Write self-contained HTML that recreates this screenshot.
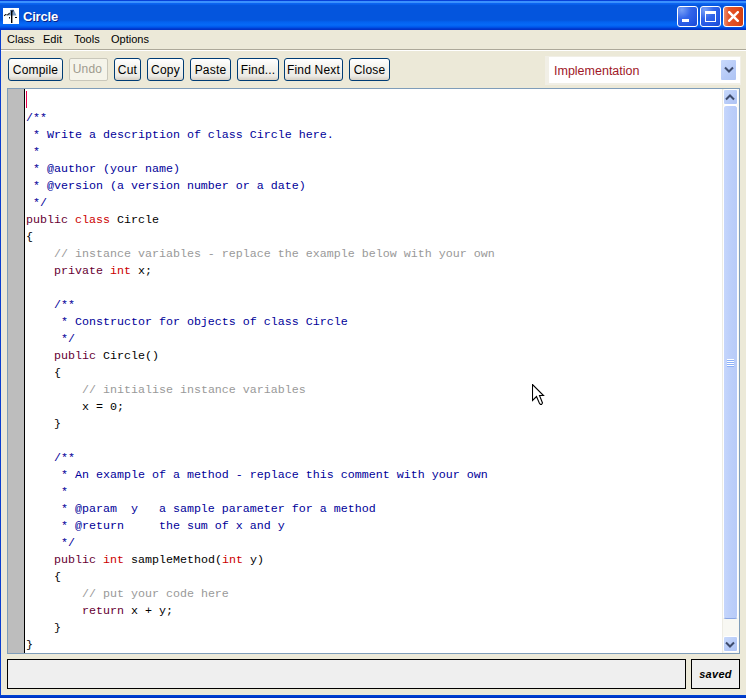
<!DOCTYPE html>
<html><head><meta charset="utf-8">
<style>
*{margin:0;padding:0;box-sizing:border-box}
html,body{width:746px;height:698px;overflow:hidden;background:#ECE9D8;font-family:"Liberation Sans",sans-serif}
.abs{position:absolute}
#win{position:absolute;left:0;top:0;width:746px;height:698px;background:#ECE9D8}
#title{position:absolute;left:0;top:0;width:746px;height:30px;
background:linear-gradient(to bottom,#0841D8 0px,#0841D8 1px,#3A93FF 1px,#3C8FFC 3px,#0D67F5 3px,#055CE6 5px,#0455DD 5px,#0455DD 20px,#0462F0 22px,#066BF8 25px,#0057EC 27px,#0048DC 28px,#0033C8 29px,#0033C8 30px)}
#lb{position:absolute;left:0;top:30px;width:1px;height:668px;background:#0A3FD0}
#bb{position:absolute;left:0;top:695px;width:746px;height:3px;background:linear-gradient(#0046D5,#0031C0)}
#ttext{position:absolute;left:23px;top:9px;color:#fff;font-weight:bold;font-size:13px;letter-spacing:-0.2px;text-shadow:1px 1px 0 #0A2288}
.tbtn{position:absolute;top:6px;width:21px;height:21px;border:1px solid #fff;border-radius:3px;overflow:hidden}
.menu{position:absolute;top:33px;font-size:11px;color:#000}
#sep{position:absolute;left:1px;top:49px;width:745px;height:1px;background:#ACA899}
#sep2{position:absolute;left:1px;top:50px;width:745px;height:1px;background:#fff}
.btn{position:absolute;top:58px;height:23px;border:1px solid #003C74;border-radius:3px;
background:linear-gradient(#FFFFFF,#F4F3EE 40%,#ECEBE6 80%,#D6D0C5);font-size:12px;color:#000;text-align:center;line-height:23px;white-space:nowrap;letter-spacing:0.2px}
.btn.dis{border-color:#C9C7BA;background:#F5F4EA;color:#9E9B8E;line-height:21px;text-indent:-2px;border-radius:2px}
#combo{position:absolute;left:549px;top:57px;width:191px;height:26px;background:#fff}
#code{position:absolute;left:7px;top:88px;width:733px;height:566px;border:1px solid #7F9DB9;background:#fff;overflow:hidden}
#gutter{position:absolute;left:0;top:0;width:17px;height:564px;background:#BDBDBD;border-right:1px solid #000}
pre{position:absolute;left:18px;top:4px;font-family:"Liberation Mono",monospace;font-size:11.67px;line-height:17px;color:#000}
.jd{color:#000099}.kw{color:#660033}.ty{color:#CC0000}.cm{color:#999999}
#vs{position:absolute;left:714px;top:0;width:17px;height:564px;background:#F8F8F3;border-left:1px solid #EDECE4}
.sb{position:absolute;left:0px;width:15px;border:1px solid #fff;border-radius:2px;background:linear-gradient(135deg,#C9DAFC,#B6CAF7 60%,#AFC4F4)}
#status{position:absolute;left:7px;top:659px;width:679px;height:30px;border:1px solid #000;background:#EFEFEF}
#saved{position:absolute;left:691px;top:659px;width:49px;height:30px;border:1px solid #000;background:#EFEFEF;font-size:11px;font-weight:bold;font-style:italic;text-align:center;line-height:29px;letter-spacing:0.3px;padding-left:0px}
</style></head><body>
<div id="win">
<div id="title">
  <svg class="abs" style="left:3px;top:8px" width="16" height="16" viewBox="0 0 16 16">
    <rect x="0" y="0" width="16" height="16" fill="#fff"/>
    <path d="M5 7.5 L8 2 L11 2.5 L13.5 7.5 Z" fill="#7C9AC0"/>
    <path d="M7 2 L10.5 1.8 L11 3 L9 4.5 Z" fill="#2A3F63"/>
    <rect x="8" y="3" width="1.4" height="12" fill="#000"/>
    <path d="M0.8 7.5 L2.5 6 L4 6.8 L6 5 L7 5.6 L4.5 7.6 L3 7 L1.2 8.2 Z" fill="#000"/>
    <rect x="6" y="9" width="1" height="1.5" fill="#111"/>
    <rect x="12" y="9" width="2" height="1" fill="#000"/>
  </svg>
  <div id="ttext">Circle</div>
  <div class="tbtn" style="left:677px;background:radial-gradient(circle at 20% 15%,#78A0F6 0,#3466EA 40%,#2256E2 75%,#1A48D2 100%)">
    <div class="abs" style="left:4px;top:12px;width:7px;height:3px;background:#fff"></div>
  </div>
  <div class="tbtn" style="left:700px;background:radial-gradient(circle at 20% 15%,#78A0F6 0,#3466EA 40%,#2256E2 75%,#1A48D2 100%)">
    <div class="abs" style="left:4px;top:4px;width:11px;height:11px;border:1px solid #fff;border-top-width:3px"></div>
  </div>
  <div class="tbtn" style="left:723px;background:linear-gradient(90deg,#EC8C6C 0,#E4552A 25%,#E04A1C 70%,#CF3E12 100%)">
    <svg class="abs" style="left:4px;top:4px" width="11" height="11" viewBox="0 0 11 11"><path d="M1.2 1.2 L9.8 9.8 M9.8 1.2 L1.2 9.8" stroke="#fff" stroke-width="2.4" stroke-linecap="square"/></svg>
  </div>
</div>
<div id="lb"></div><div id="bb"></div>
<div class="menu" style="left:7px">Class</div>
<div class="menu" style="left:43px">Edit</div>
<div class="menu" style="left:74px">Tools</div>
<div class="menu" style="left:111px">Options</div>
<div id="sep"></div><div id="sep2"></div>
<div class="btn" style="left:8px;width:55px">Compile</div>
<div class="btn dis" style="left:69px;width:39px">Undo</div>
<div class="btn" style="left:114px;width:27px">Cut</div>
<div class="btn" style="left:147px;width:37px">Copy</div>
<div class="btn" style="left:190px;width:41px">Paste</div>
<div class="btn" style="left:237px;width:42px">Find...</div>
<div class="btn" style="left:284px;width:59px">Find Next</div>
<div class="btn" style="left:349px;width:41px">Close</div>
<div class="abs" style="left:545px;top:56px;width:196px;height:29px;background:#F1EFE6"></div>
<div id="combo"><span class="abs" style="left:5px;top:7px;font-size:12.5px;color:#A01828">Implementation</span>
  <div class="abs" style="left:172px;top:3px;width:15px;height:20px;background:linear-gradient(135deg,#C9DAFC,#B6CAF7 60%,#AFC4F4);border-radius:1px">
    <svg class="abs" style="left:3px;top:6px" width="10" height="7" viewBox="0 0 10 7"><path d="M1 1.5 L5 5.5 L9 1.5" fill="none" stroke="#3D4B6C" stroke-width="2"/></svg>
  </div>
</div>
<div id="code">
<div id="gutter"></div>
<div class="abs" style="left:18px;top:2px;width:1px;height:17px;background:#E8004E"></div>
<pre>

<span class="jd">/**
 * Write a description of class Circle here.
 * 
 * @author (your name)
 * @version (a version number or a date)
 */</span>
<span class="kw">public</span> <span class="ty">class</span> Circle
{
    <span class="cm">// instance variables - replace the example below with your own</span>
    <span class="kw">private</span> <span class="ty">int</span> x;

    <span class="jd">/**
     * Constructor for objects of class Circle
     */</span>
    <span class="kw">public</span> Circle()
    {
        <span class="cm">// initialise instance variables</span>
        x = 0;
    }

    <span class="jd">/**
     * An example of a method - replace this comment with your own
     * 
     * @param  y   a sample parameter for a method
     * @return     the sum of x and y
     */</span>
    <span class="kw">public</span> <span class="ty">int</span> sampleMethod(<span class="ty">int</span> y)
    {
        <span class="cm">// put your code here</span>
        <span class="kw">return</span> x + y;
    }
}</pre>
<div id="vs">
  <div class="sb" style="top:0px;height:16px">
    <svg class="abs" style="left:1px;top:4px" width="10" height="7" viewBox="0 0 10 7"><path d="M1 5.5 L5 1.5 L9 5.5" fill="none" stroke="#3D4B6C" stroke-width="2"/></svg>
  </div>
  <div class="sb" style="top:16px;height:514px;border-radius:3px;border-bottom-color:#8AA6E4;background:linear-gradient(90deg,#C6D6FC,#BCCFFA 50%,#B8CBF8)">
    <div class="abs" style="left:3px;top:253px;width:7px;height:1px;background:#fff"></div>
    <div class="abs" style="left:3px;top:254px;width:7px;height:1px;background:#8CB0F8"></div>
    <div class="abs" style="left:3px;top:255px;width:7px;height:1px;background:#fff"></div>
    <div class="abs" style="left:3px;top:256px;width:7px;height:1px;background:#8CB0F8"></div>
    <div class="abs" style="left:3px;top:257px;width:7px;height:1px;background:#fff"></div>
    <div class="abs" style="left:3px;top:258px;width:7px;height:1px;background:#8CB0F8"></div>
    <div class="abs" style="left:3px;top:259px;width:7px;height:1px;background:#fff"></div>
    <div class="abs" style="left:3px;top:260px;width:7px;height:1px;background:#8CB0F8"></div>
    </div>
  <div class="sb" style="top:547px;height:16px">
    <svg class="abs" style="left:1px;top:4px" width="10" height="7" viewBox="0 0 10 7"><path d="M1 1.5 L5 5.5 L9 1.5" fill="none" stroke="#3D4B6C" stroke-width="2"/></svg>
  </div>
</div>
</div>
<div id="status"></div>
<div id="saved">saved</div>
<svg class="abs" style="left:532px;top:384px" width="13" height="22" viewBox="0 0 13 22">
  <path d="M0.5 0.5 L0.5 16.5 L4.5 12.5 L7.5 19.5 L8.5 20.5 L9.5 20.5 L10.5 19 L7.5 11.5 L11.5 11.5 Z" fill="#fff" stroke="#000" stroke-width="1.1"/>
</svg>
</div>
</body></html>
